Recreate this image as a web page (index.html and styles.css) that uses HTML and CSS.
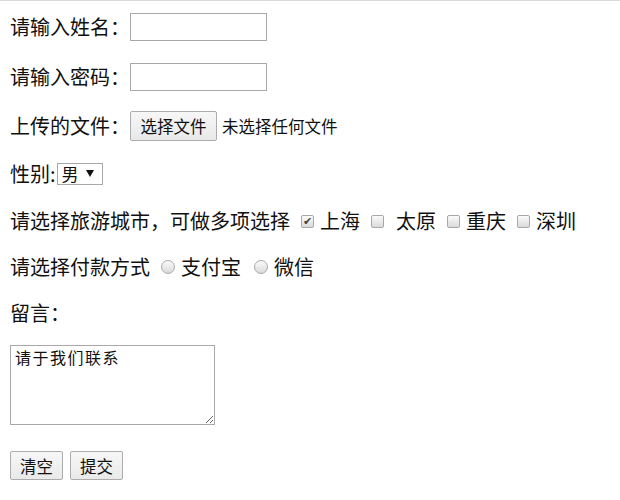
FILE: index.html
```html
<!DOCTYPE html>
<html lang="zh">
<head>
<meta charset="utf-8">
<title>表单</title>
<link rel="stylesheet" href="styles.css">
</head>
<body>
<form class="form">
  <div class="row r1">请输入姓名：<input class="text" type="text"></div>
  <div class="row r2">请输入密码：<input class="text" type="password"></div>
  <div class="row r3">上传的文件：<button type="button" class="btn file-btn">选择文件</button><span class="file-note">未选择任何文件</span></div>
  <div class="row r4">性别:<span class="select-wrap"><select class="select"><option>男</option><option>女</option></select></span></div>
  <div class="row r5">请选择旅游城市，可做多项选择<input class="check" type="checkbox" checked><span>上海</span><input class="check" type="checkbox"><span class="extra">太原</span><input class="check" type="checkbox"><span>重庆</span><input class="check" type="checkbox"><span>深圳</span></div>
  <div class="row r6">请选择付款方式<input class="radio" type="radio" name="pay"><span>支付宝</span><input class="radio" type="radio" name="pay"><span>微信</span></div>
  <div class="row r7">留言：</div>
  <textarea class="msg">请于我们联系</textarea>
  <div class="actions"><button type="reset" class="btn">清空</button><button type="submit" class="btn">提交</button></div>
</form>
</body>
</html>
```
FILE: styles.css
```css
html, body {
  margin: 0;
  padding: 0;
  background: #fff;
}
body {
  border-top: 1px solid #d9d9de;
  font-family: "Noto Sans CJK SC", "Microsoft YaHei", sans-serif;
  font-size: 20px;
  color: #111;
}
.form {
  display: flex;
  flex-direction: column;
  align-items: flex-start;
  padding: 0 10px;
}
.row {
  display: flex;
  align-items: center;
  white-space: nowrap;
  line-height: 24px;
}
.r1 { margin-top: 12px; height: 28px; }
.r2 { margin-top: 22px; height: 28px; }
.r3 { margin-top: 20px; height: 30px; }
.r4 { margin-top: 22px; height: 22px; }
.r5 { margin-top: 23px; height: 26px; }
.r6 { margin-top: 20px; height: 26px; }
.r7 { margin-top: 20px; height: 26px; }

.text {
  box-sizing: border-box;
  width: 137px;
  height: 28px;
  margin: 0;
  border: 1px solid #a9a9a9;
  padding: 2px 4px;
  font-size: 16px;
  outline: none;
}
.btn {
  box-sizing: border-box;
  margin: 0;
  height: 29px;
  padding: 0 9px;
  border: 1px solid #acacac;
  border-radius: 2px;
  background: linear-gradient(#f7f7f7, #e9e9e9);
  font-family: "Noto Sans CJK SC", sans-serif;
  font-size: 16.5px;
  line-height: 26px;
  color: #111;
}
.file-btn {
  width: 87px;
  height: 30px;
  padding: 0;
}
.file-note {
  margin-left: 5px;
  font-size: 16.5px;
}
.select-wrap {
  position: relative;
  display: inline-block;
  margin-left: 1px;
}
.select {
  box-sizing: border-box;
  appearance: none;
  -webkit-appearance: none;
  width: 46px;
  height: 22px;
  margin: 0;
  padding: 0 0 0 4px;
  border: 1px solid #a9a9a9;
  border-radius: 0;
  background: #fff;
  font-family: "Noto Sans CJK SC", sans-serif;
  font-size: 17px;
  line-height: 20px;
  color: #111;
  display: block;
}
.select-wrap::after {
  content: "";
  position: absolute;
  right: 9px;
  top: 7px;
  border-left: 4px solid transparent;
  border-right: 4px solid transparent;
  border-top: 7px solid #111;
  pointer-events: none;
}
.check, .radio {
  appearance: none;
  -webkit-appearance: none;
  box-sizing: border-box;
  position: relative;
  margin: 0 6px 0 11px;
  border: 1px solid #a8a8a8;
  background: linear-gradient(#fbfbfb, #dadada);
}
.check {
  width: 13px;
  height: 13px;
  border-radius: 2px;
}
.check:checked::before {
  content: "✔";
  position: absolute;
  left: 1px;
  top: -4px;
  font-size: 11px;
  line-height: 18px;
  color: #444;
}
.radio {
  width: 14px;
  height: 14px;
  border-radius: 50%;
}
.radio + span + .radio { margin-left: 13px; }
.extra { margin-left: 6px; }

.msg {
  box-sizing: border-box;
  margin-top: 19px;
  width: 205px;
  height: 80px;
  padding: 1px 4px;
  border: 1px solid #a9a9a9;
  font-family: "Noto Sans CJK SC", sans-serif;
  font-size: 16px;
  letter-spacing: 1.5px;
  line-height: 20px;
  color: #111;
  outline: none;
}
.actions {
  display: flex;
  gap: 7px;
  margin-top: 26px;
}
.actions .btn { width: 53px; padding: 0; }
```
